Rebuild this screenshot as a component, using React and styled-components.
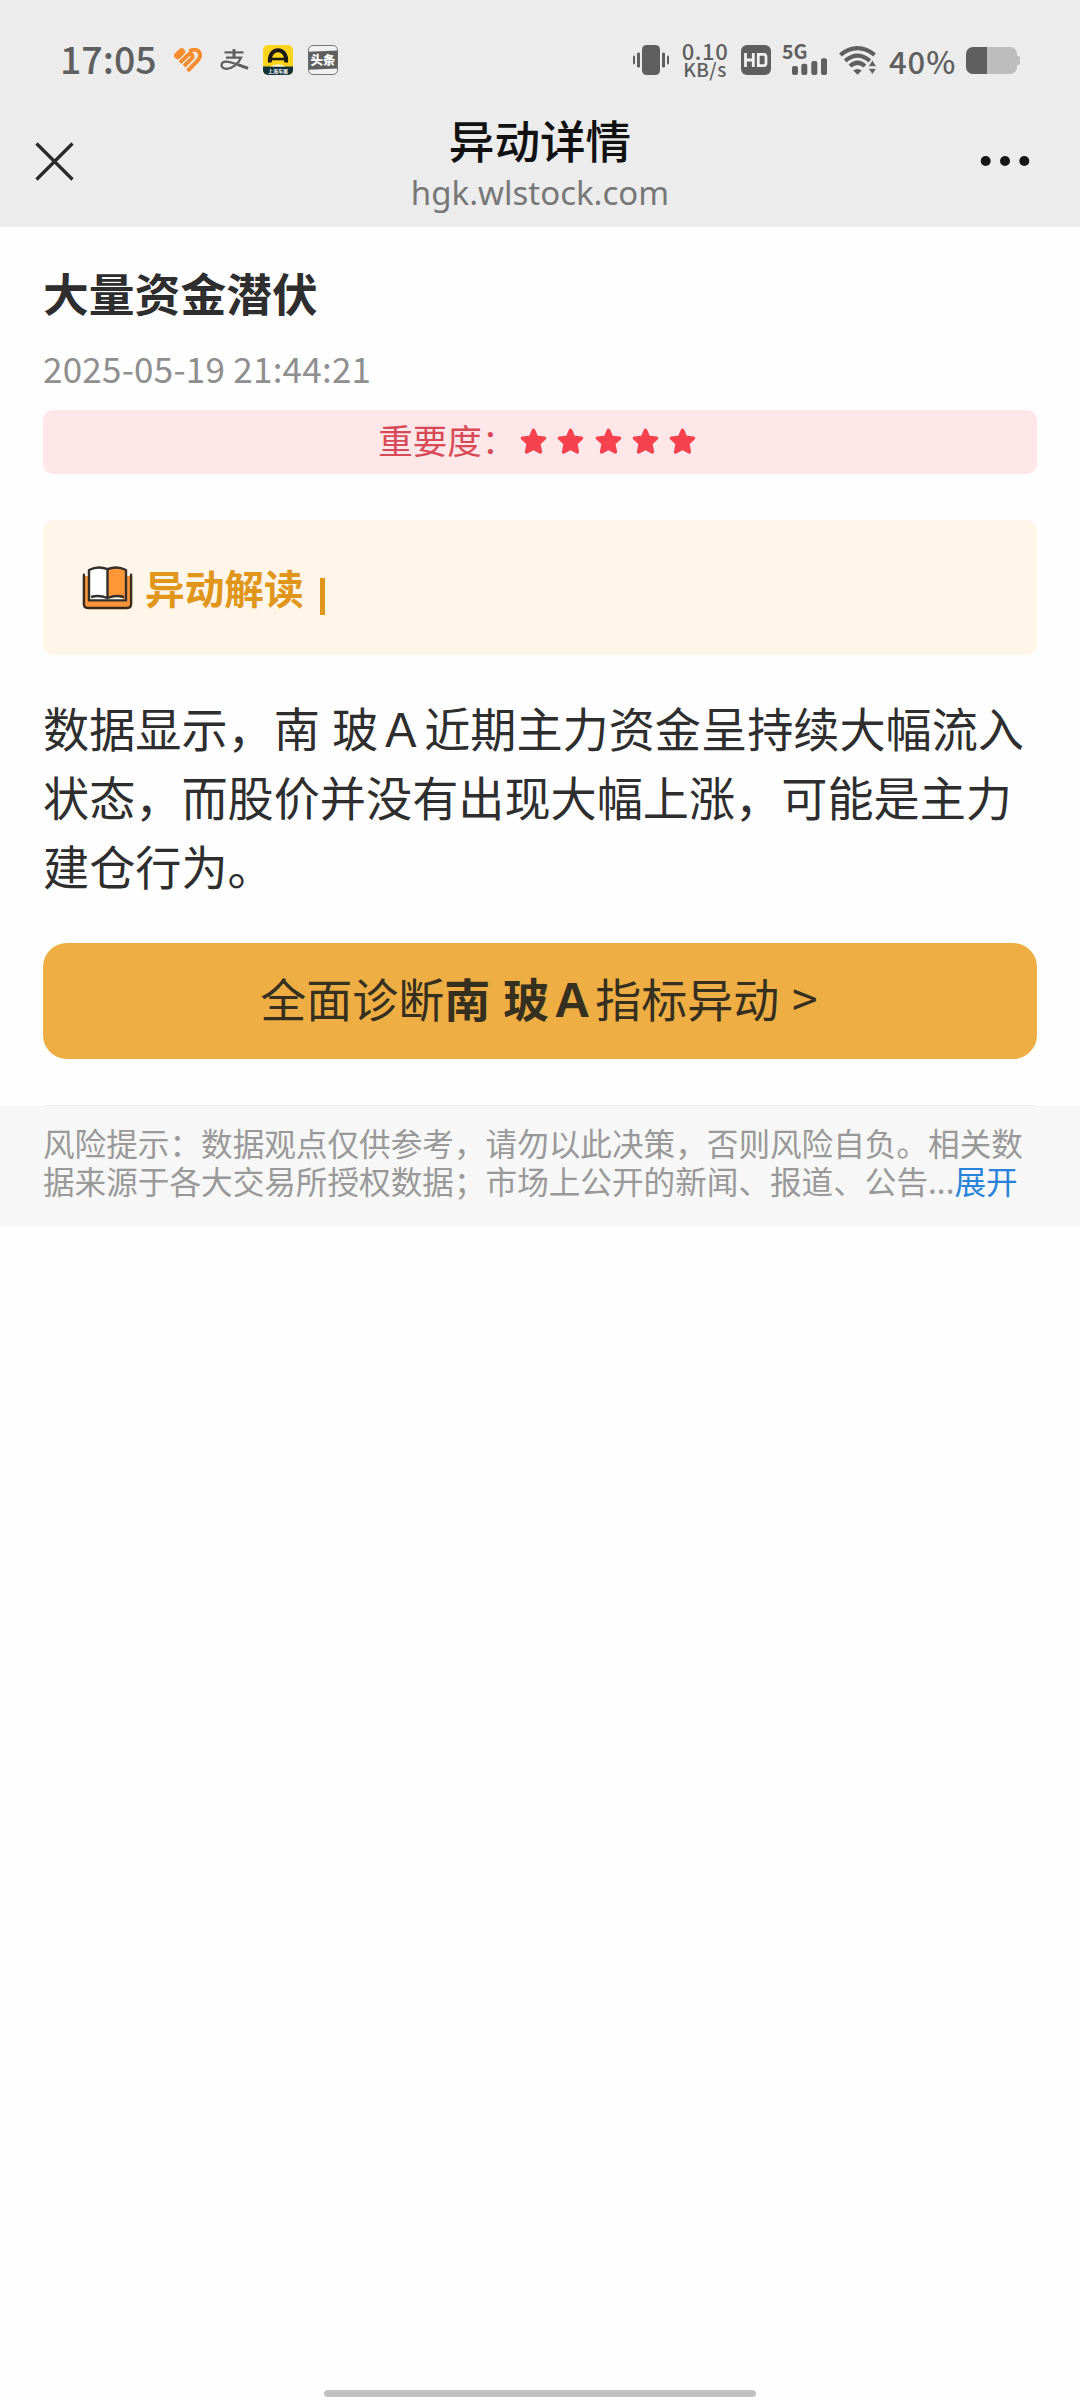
import React from 'react';
import styled, { createGlobalStyle } from 'styled-components';

const GlobalStyle = createGlobalStyle`
  * {
    box-sizing: border-box;
  }

  body {
    margin: 0;
    background: #fefefe;
    font-family: "Noto Sans CJK SC", "Noto Sans", sans-serif;
    text-spacing-trim: space-all;
  }
`;

const Page = styled.div`
  display: flex;
  flex-direction: column;
  width: 1080px;
  height: 2400px;
  background: #fefefe;
  color: #2e2e2e;
`;

const TopArea = styled.header`
  height: 227px;
  background: #ececec;
`;

// Phone status bar
const StatusBar = styled.div`
  display: flex;
  align-items: center;
  justify-content: space-between;
  height: 120px;
  padding: 0 60px 0 60px;
  color: #5f5f5f;
`;

const StatusGroup = styled.div`
  display: flex;
  align-items: center;
`;

const StatusIcon = styled.svg`
  display: block;
  flex: none;
  margin-left: ${(props) => props.$gap || 0}px;
`;

const Clock = styled.span`
  font-size: 37.5px;
  font-weight: 500;
  line-height: 44px;
  width: 98px;
  margin-top: -5px;
`;

const Speed = styled.div`
  display: flex;
  flex-direction: column;
  align-items: center;
  width: 46px;
  margin: -2px 0 0 13px;
  font-weight: 500;
  white-space: nowrap;
`;

const SpeedValue = styled.span`
  font-size: 22px;
  line-height: 20px;
  letter-spacing: 0.6px;
`;

const SpeedUnit = styled.span`
  font-size: 19px;
  line-height: 18px;
  letter-spacing: 0.4px;
`;

const Percent = styled.span`
  margin: 2px 0 0 12px;
  width: 77px;
  font-size: 31px;
  font-weight: 500;
  line-height: 36px;
  letter-spacing: 0.9px;
`;

const NavBar = styled.nav`
  display: flex;
  align-items: flex-start;
  justify-content: space-between;
  height: 107px;
  padding: 0 50px 0 35px;
`;

const NavSide = styled.button`
  display: flex;
  justify-content: ${(props) => (props.$end ? 'flex-end' : 'flex-start')};
  width: 120px;
  height: 82px;
  align-items: center;
  padding: 0;
  border: 0;
  background: none;
`;

const NavText = styled.div`
  display: flex;
  flex-direction: column;
  align-items: center;
  padding-left: 15px;
`;

const NavTitle = styled.h1`
  margin: -6px 0 0;
  font-size: 45.6px;
  font-weight: 500;
  line-height: 50px;
  color: #111;
`;

const NavUrl = styled.span`
  margin-top: 7px;
  font-family: "Noto Sans", sans-serif;
  font-size: 33px;
  line-height: 44px;
  color: #777;
`;

const Content = styled.main`
  display: flex;
  flex-direction: column;
  padding: 0 43px;
`;

const Title = styled.h2`
  margin: 37px 0 0;
  font-size: 45.8px;
  font-weight: 700;
  line-height: 56px;
`;

const DateText = styled.time`
  margin-top: 26px;
  font-size: 35px;
  line-height: 44px;
  letter-spacing: 0.25px;
  color: #8f8f8f;
`;

const Importance = styled.div`
  display: flex;
  align-items: center;
  justify-content: center;
  height: 64px;
  margin-top: 20px;
  padding: 0 6px 2px 0;
  border-radius: 10px;
  background: #fee7e9;
`;

const ImportanceLabel = styled.span`
  width: 142px;
  margin-top: -5px;
  font-size: 34.6px;
  line-height: 44px;
  color: #d84a58;
  white-space: nowrap;
`;

const Stars = styled.div`
  display: flex;
  gap: 10.2px;
`;

const TipBox = styled.section`
  display: flex;
  align-items: center;
  height: 135px;
  margin-top: 46px;
  padding-left: 39px;
  border-radius: 11px;
  background: #fff6e9;
`;

const TipTitle = styled.h3`
  margin: -2px 0 0 12px;
  font-size: 39.7px;
  font-weight: 700;
  line-height: 50px;
  color: #e0951b;
`;

const Cursor = styled.span`
  width: 5px;
  height: 37px;
  margin: 17px 0 0 16px;
  background: #e0951b;
`;

const Paragraph = styled.p`
  margin: 37px 0 0;
  font-size: 46.15px;
  line-height: 69px;
  word-spacing: 1.7px;
`;

const DiagnoseButton = styled.button`
  height: 116px;
  margin-top: 44px;
  padding: 0 2px 8px 0;
  border: 0;
  border-radius: 24px;
  background: #eeae43;
  font-family: inherit;
  font-size: 46px;
  line-height: 60px;
  word-spacing: 2.5px;
  color: #35301f;
`;

const Divider = styled.hr`
  width: 100%;
  height: 1px;
  margin: 46px 0 0;
  border: 0;
  background: #efefef;
`;

const Notice = styled.footer`
  height: 121px;
  padding: 17px 43px 0;
  background: #f7f7f7;
  font-size: 31.62px;
  line-height: 38px;
  color: #999;
`;

const Expand = styled.a`
  display: inline-block;
  color: #2683d9;
`;

const HomeIndicator = styled.div`
  width: 432px;
  height: 7px;
  margin: auto auto 3px;
  border-radius: 4px;
  background: #c1c1c1;
`;

const HeartIcon = () => (
  <StatusIcon $gap={16} width="28" height="25" viewBox="0 0 28 25">
    <g fill="none" stroke="#f78d2c">
      <path d="M3.6 7.6 L7.6 3.8" strokeWidth="7" strokeLinecap="round" />
      <path d="M5.9 14.6 L14.2 6.8 Q16.4 5 18 6.8 Q19.4 8.8 17.6 10.6 L10 18" strokeWidth="3.9" />
      <path d="M15.4 3.6 C19.6 .2 25 1.6 26 6 C26.5 9 25.2 11 23.4 12.8 L13.6 22.8" strokeWidth="4" />
    </g>
  </StatusIcon>
);

const PayIcon = () => (
  <StatusIcon $gap={18} width="29" height="24" viewBox="0 0 29 24">
    <g stroke="#5f5f5f" fill="none" strokeLinecap="butt">
      <path d="M4.5 4.4 H23.5" strokeWidth="2.2" />
      <path d="M14 1 V9.6" strokeWidth="3" />
      <path d="M6 9.6 H21 C18.6 15.6 12.5 20.8 6.5 20.8 C-.2 20.8 0 13.6 6.4 13.6 C12 13.6 18.5 17.6 28 20" strokeWidth="2.3" />
      <path d="M18 16.6 L28 20.4" strokeWidth="3" />
    </g>
  </StatusIcon>
);

const CarAppIcon = () => (
  <StatusIcon $gap={14} width="30" height="30" viewBox="0 0 30 30">
    <rect width="30" height="30" rx="5" fill="#fdd41c" />
    <path d="M0 21.5 H30 V25 A5 5 0 0 1 25 30 H5 A5 5 0 0 1 0 25 Z" fill="#10303a" />
    <path d="M7 17.6 C5 1 25 1 23 17.6" fill="none" stroke="#1c1a12" strokeWidth="4" />
    <path d="M8 14 H22" stroke="#1c1a12" strokeWidth="2.6" />
    <path d="M7.5 21.5 Q15 17.4 22.5 21.5 Z" fill="#fff" />
    <text x="15" y="27.5" fontSize="5" fontWeight="700" textAnchor="middle" fill="#fff">上海车展</text>
  </StatusIcon>
);

const NewsIcon = () => (
  <StatusIcon $gap={15} width="30" height="30" viewBox="0 0 30 30">
    <rect x=".5" y=".5" width="29" height="29" rx="4.5" fill="#f1f1f1" stroke="#777" />
    <path d="M.5 6.8 L29.5 5.4 V23.4 L.5 24.8 Z" fill="#5f5f5f" />
    <text x="15" y="19.6" fontSize="12.4" fontWeight="900" textAnchor="middle" fill="#fff">头条</text>
  </StatusIcon>
);

const VibrateIcon = () => (
  <StatusIcon width="36" height="30" viewBox="0 0 36 30" fill="#5f5f5f">
    <rect x="9" width="18" height="30" rx="4.5" />
    <rect x="0" y="10.5" width="2" height="9" rx="1" />
    <rect x="4" y="7.5" width="3" height="15" rx="1.2" />
    <rect x="29" y="7.5" width="3" height="15" rx="1.2" />
    <rect x="34" y="10.5" width="2" height="9" rx="1" />
  </StatusIcon>
);

const HdIcon = () => (
  <StatusIcon $gap={13} width="30" height="30" viewBox="0 0 30 30">
    <rect width="30" height="30" rx="6" fill="#5f5f5f" />
    <g fill="none" stroke="#f1f1f1" strokeWidth="2.8">
      <path d="M4.5 8 V22 M12.3 8 V22 M4.5 15 H12.3" />
      <path d="M17.3 9.4 H22.6 Q25 9.4 25 11.8 V18.2 Q25 20.6 22.6 20.6 H17.3 Z" />
    </g>
  </StatusIcon>
);

const Signal = styled.div`
  display: flex;
  flex-direction: column;
  width: 46px;
  height: 30px;
  margin-left: 11px;
`;

const Network = styled.span`
  margin-top: -3px;
  font-size: 19.5px;
  font-weight: 700;
  line-height: 17px;
`;

const SignalBars = styled.svg`
  margin: -1px 0 0 10px;
`;

const SignalIcon = () => (
  <Signal>
    <Network>5G</Network>
    <SignalBars width="36" height="17" viewBox="0 0 36 17" fill="#5f5f5f">
      <rect x="0" y="8" width="6" height="9" rx="2" />
      <rect x="9.3" y="5.7" width="6" height="11.3" rx="2" />
      <rect x="19.3" y="3" width="6" height="14" rx="2" />
      <rect x="29" y=".3" width="6" height="16.7" rx="2" />
    </SignalBars>
  </Signal>
);

const WifiIcon = () => (
  <StatusIcon $gap={11} width="38" height="30" viewBox="0 0 38 30">
    <g fill="none" stroke="#5f5f5f" strokeWidth="4.2">
      <path d="M1.4 9.8 Q18.5 -3.4 35.6 9.8" />
      <path d="M6.2 15.8 Q18.5 5.4 30.8 15.8" />
      <path d="M11 21 Q18.5 14.6 26 21" />
    </g>
    <path d="M14.2 25.4 Q18.5 22.4 22.8 25.4 L18.5 29.8 Z" fill="#5f5f5f" />
    <path d="M33.4 15 L37.6 21.4 H29.2 Z M33.4 29.4 L37.6 23.4 H29.2 Z" fill="#5f5f5f" stroke="#ececec" strokeWidth=".8" />
  </StatusIcon>
);

const BatteryIcon = () => (
  <StatusIcon width="54" height="27" viewBox="0 0 54 27">
    <rect width="51" height="27" rx="7" fill="#bdbdbd" />
    <path d="M51 9 H52 Q54 9 54 11 V16 Q54 18 52 18 H51 Z" fill="#bdbdbd" />
    <path d="M7 0 H21 V27 H7 A7 7 0 0 1 0 20 V7 A7 7 0 0 1 7 0 Z" fill="#5f5f5f" />
  </StatusIcon>
);

const Star = () => (
  <svg width="27" height="27" viewBox="0 0 26 26">
    <path
      d="M13 2.2 L15.8 9 L23.6 9.8 L18 14.8 L19.6 23 L13 19.4 L6.4 23 L8 14.8 L2.4 9.8 L10.2 9 Z"
      fill="#f6414e"
      stroke="#f6414e"
      strokeWidth="3.4"
      strokeLinejoin="round"
    />
  </svg>
);

const BookIcon = () => (
  <svg width="51" height="44" viewBox="0 0 51 44">
    <path d="M2 10 V38 Q2 42 6 42 H45 Q49 42 49 38 V10 H44 V34 H7 V10 Z" fill="#f9963b" />
    <path
      d="M1.9 8.8 V38 Q1.9 42 5.9 42 H45.1 Q49.1 42 49.1 38 V8.8"
      fill="none"
      stroke="#3a2a1b"
      strokeWidth="2.4"
      strokeLinecap="round"
    />
    <path d="M7 4 Q16 -.6 25.5 3.2 V32 Q16 29.5 7 34 Z" fill="#fff" />
    <path d="M25.5 3.2 Q35 -.6 44 4 V34 Q35 29.5 25.5 32 Z" fill="#ff9637" />
    <path d="M8 34 Q17 28.6 25.5 32.4 Q34 28.6 43 34 Z" fill="#fff" />
    <path
      d="M25.5 3.2 Q16 -.6 7 4 V34.4 H44 V4 Q35 -.6 25.5 3.2 V32 Q34 28.6 42 31 M25.5 32 Q17 28.6 9 31"
      fill="none"
      stroke="#33302c"
      strokeWidth="2.4"
      strokeLinejoin="round"
    />
  </svg>
);

const App = () => {
  return (
    <Page>
      <GlobalStyle />
      <TopArea>
        <StatusBar>
          <StatusGroup>
            <Clock>17:05</Clock>
            <HeartIcon />
            <PayIcon />
            <CarAppIcon />
            <NewsIcon />
          </StatusGroup>
          <StatusGroup>
            <VibrateIcon />
            <Speed>
              <SpeedValue>0.10</SpeedValue>
              <SpeedUnit>KB/s</SpeedUnit>
            </Speed>
            <HdIcon />
            <SignalIcon />
            <WifiIcon />
            <Percent>40%</Percent>
            <BatteryIcon />
          </StatusGroup>
        </StatusBar>
        <NavBar>
          <NavSide aria-label="close">
            <svg width="39" height="39" viewBox="0 0 39 39">
              <path d="M1.5 1.5 L37.5 37.5 M37.5 1.5 L1.5 37.5" stroke="#2a2a2a" strokeWidth="3.2" />
            </svg>
          </NavSide>
          <NavText>
            <NavTitle>异动详情</NavTitle>
            <NavUrl>hgk.wlstock.com</NavUrl>
          </NavText>
          <NavSide $end aria-label="more">
            <svg width="50" height="12" viewBox="0 0 50 12" fill="#161616">
              <circle cx="5.7" cy="6" r="5" />
              <circle cx="25" cy="6" r="5" />
              <circle cx="44.3" cy="6" r="5" />
            </svg>
          </NavSide>
        </NavBar>
      </TopArea>

      <Content>
        <Title>大量资金潜伏</Title>
        <DateText>2025-05-19 21:44:21</DateText>
        <Importance>
          <ImportanceLabel>重要度：</ImportanceLabel>
          <Stars>
            {[1, 2, 3, 4, 5].map((n) => (
              <Star key={n} />
            ))}
          </Stars>
        </Importance>

        <TipBox>
          <BookIcon />
          <TipTitle>异动解读</TipTitle>
          <Cursor />
        </TipBox>

        <Paragraph>
          数据显示，南 玻Ａ近期主力资金呈持续大幅流入状态，而股价并没有出现大幅上涨，可能是主力建仓行为。
        </Paragraph>

        <DiagnoseButton>
          全面诊断<b>南 玻Ａ</b>指标异动 &gt;
        </DiagnoseButton>
        <Divider />
      </Content>

      <Notice>
        风险提示：数据观点仅供参考，请勿以此决策，否则风险自负。相关数据来源于各大交易所授权数据；市场上公开的新闻、报道、公告...<Expand>展开</Expand>
      </Notice>

      <HomeIndicator />
    </Page>
  );
};

export default App;
